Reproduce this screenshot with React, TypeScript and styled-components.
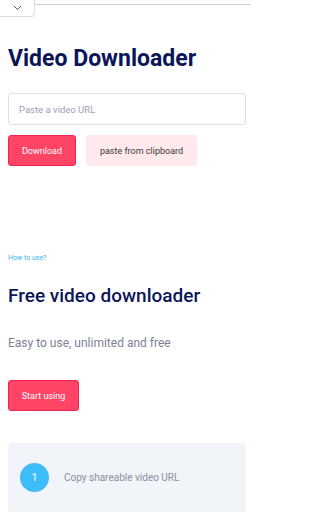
import styled, { createGlobalStyle } from "styled-components";

const GlobalStyle = createGlobalStyle`
    html, body {
        margin: 0;
        padding: 0;
        background: #ffffff;
    }

    body {
        font-family: Roboto, "Liberation Sans", sans-serif;
        overflow: hidden;
    }
`;

const App = () => {
    return (
        <Page>
            <GlobalStyle />
            <TopBar>
                <MenuTab>
                    <svg width="9" height="6" viewBox="0 0 9 6" fill="none">
                        <path d="M1 1l3.5 3.5L8 1" stroke="#555" strokeWidth="1" />
                    </svg>
                </MenuTab>
                <TopLine />
            </TopBar>

            <Content>
                <Title>Video Downloader</Title>
                <UrlInput placeholder="Paste a video URL" />
                <BtnRow>
                    <PrimaryBtn>Download</PrimaryBtn>
                    <SoftBtn>paste from clipboard</SoftBtn>
                </BtnRow>

                <HowLink>How to use?</HowLink>
                <SubTitle>Free video downloader</SubTitle>
                <Lead>Easy to use, unlimited and free</Lead>
                <PrimaryBtn $wide>Start using</PrimaryBtn>

                <StepsCard>
                    <StepRow>
                        <StepNum>1</StepNum>
                        <StepText>Copy shareable video URL</StepText>
                    </StepRow>
                    <Divider />
                </StepsCard>
            </Content>
        </Page>
    );
};

export default App;

const Page = styled.div`
    width: 253px;
    height: 512px;
    overflow: hidden;
`;

const TopBar = styled.div`
    display: flex;
    align-items: flex-start;
    height: 18px;
`;

const MenuTab = styled.div`
    display: flex;
    align-items: center;
    justify-content: center;

    width: 35px;
    height: 17px;
    padding-bottom: 1px;
    box-sizing: border-box;

    border: 1px solid #dcdcdc;
    border-top: none;
    border-left: none;
    border-radius: 0 0 4px 0;
    background: #ffffff;
`;

const TopLine = styled.div`
    flex: 1;
    height: 1px;
    margin-top: 4px;
    margin-right: 3px;
    background: #cfcfcf;
`;

const Content = styled.div`
    display: flex;
    flex-direction: column;
    align-items: flex-start;
    padding: 0 7px 0 8px;
`;

const Title = styled.h1`
    margin: 27px 0 0;
    font-size: 23px;
    font-weight: 700;
    line-height: 27px;
    color: #0b1659;
`;

const UrlInput = styled.input`
    all: unset;
    box-sizing: border-box;
    width: 238px;
    height: 32px;
    margin-top: 21px;
    padding-left: 10px;

    border: 1px solid #dfe0e6;
    border-radius: 3px;

    font-family: Roboto, "Liberation Sans", sans-serif;
    font-size: 9.5px;
    color: #333;

    &::placeholder {
        color: #9da1b2;
    }
`;

const BtnRow = styled.div`
    display: flex;
    gap: 10px;
    margin-top: 10px;
`;

const PrimaryBtn = styled.button<{ $wide?: boolean }>`
    all: unset;
    display: flex;
    align-items: center;
    justify-content: center;
    box-sizing: border-box;

    width: ${(p) => (p.$wide ? "71px" : "68px")};
    height: 31px;
    margin-top: ${(p) => (p.$wide ? "29px" : "0")};

    border: 1px solid #f0254f;
    border-radius: 3px;
    background: #ff4466;

    font-family: Roboto, "Liberation Sans", sans-serif;
    font-size: 9px;
    font-weight: 400;
    color: #ffffff;
`;

const SoftBtn = styled.button`
    all: unset;
    display: flex;
    align-items: center;
    justify-content: center;
    box-sizing: border-box;

    width: 111px;
    height: 31px;

    border-radius: 3px;
    background: #ffe9ec;

    font-family: Roboto, "Liberation Sans", sans-serif;
    font-size: 9px;
    font-weight: 400;
    color: #3a3a3a;
`;

const HowLink = styled.a`
    margin-top: 88px;
    font-size: 7px;
    line-height: 9px;
    color: #36b6f4;
`;

const SubTitle = styled.h2`
    margin: 22px 0 0;
    font-size: 19px;
    font-weight: 500;
    line-height: 22px;
    color: #0b1659;
`;

const Lead = styled.p`
    margin: 28px 0 0;
    font-size: 12px;
    line-height: 16px;
    color: #7b8199;
`;

const StepsCard = styled.div`
    box-sizing: border-box;
    width: 238px;
    margin-top: 32px;
    padding: 20px 12px 0;

    border-radius: 3px;
    background: #f1f4f9;
`;

const StepRow = styled.div`
    display: flex;
    align-items: center;
    gap: 15px;
`;

const StepNum = styled.div`
    display: flex;
    align-items: center;
    justify-content: center;

    width: 29px;
    height: 29px;
    border-radius: 50%;
    background: #3dbdf8;

    font-size: 10px;
    color: #ffffff;
`;

const StepText = styled.div`
    font-size: 10px;
    color: #8a8fa3;
`;

const Divider = styled.div`
    height: 1px;
    margin-top: 20px;
    background: #dfe4ee;
`;
